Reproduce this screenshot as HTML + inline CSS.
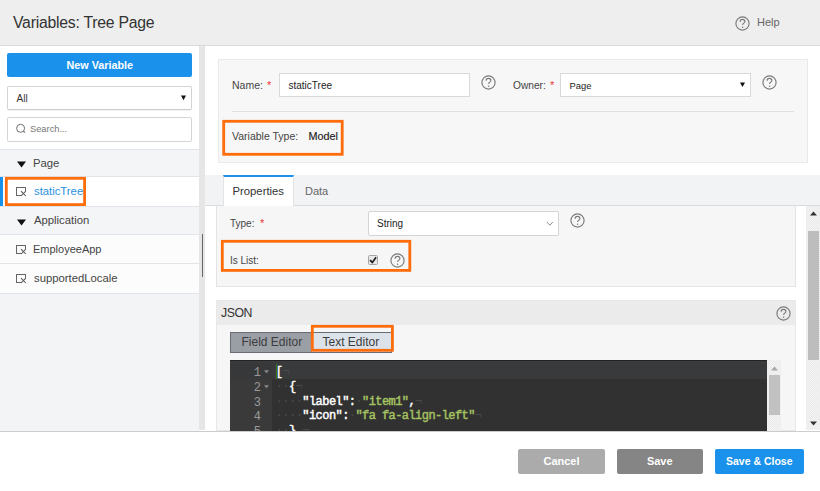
<!DOCTYPE html>
<html><head><meta charset="utf-8">
<style>
*{box-sizing:border-box;margin:0;padding:0}
html,body{width:820px;height:491px;overflow:hidden;background:#fff;font-family:"Liberation Sans",sans-serif;color:#333}
.a{position:absolute}
.t{position:absolute;white-space:nowrap;line-height:1}
.q{position:absolute;width:15px;height:15px}
.ob{position:absolute;border:2px solid #f57a22}
.gl{position:absolute;left:0;width:31px;text-align:right;font-family:"Liberation Mono",monospace;font-size:12px;line-height:14.65px;color:#9a9a9a;white-space:pre}
.cl{position:absolute;left:45.8px;font-family:"Liberation Mono",monospace;font-size:12px;letter-spacing:-0.57px;line-height:14.65px;color:#fff;white-space:pre;-webkit-text-stroke:0.45px currentColor}
.inv{color:#4a4a4a;-webkit-text-stroke:0}
.key{color:#fff}
.str{color:#a5c261}
</style></head><body>
<!-- header -->
<div class="a" style="left:0;top:0;width:820px;height:46px;background:#eeeeee;border-bottom:1px solid #d9d9d9"></div>
<div class="t" style="left:13px;top:15px;font-size:15.8px;letter-spacing:-0.25px;color:#333">Variables: Tree Page</div>
<svg class="q" style="left:734.5px;top:16px" viewBox="0 0 15 15"><circle cx="7.5" cy="7.5" r="6.6" fill="none" stroke="#7a7a7a" stroke-width="1.15"/><path d="M5.1 5.7C5.1 4.1 6.2 3.4 7.5 3.4C8.9 3.4 9.9 4.3 9.9 5.5C9.9 7.1 7.6 7.2 7.6 8.9" fill="none" stroke="#7a7a7a" stroke-width="1.1"/><circle cx="7.6" cy="11.2" r="0.75" fill="#7a7a7a"/></svg>
<div class="t" style="left:757px;top:17px;font-size:11px;color:#666">Help</div>

<!-- left panel -->
<div class="a" style="left:199px;top:46px;width:6px;height:384px;background:#e6e6e6"></div>
<div class="a" style="left:201.5px;top:234px;width:1.5px;height:43px;background:#666"></div>
<div class="a" style="left:7px;top:53px;width:185px;height:24px;background:#1a91eb;border-radius:2px"></div>
<div class="t" style="left:66.5px;top:59.8px;font-size:10.8px;font-weight:bold;color:#fff">New Variable</div>
<div class="a" style="left:7px;top:86px;width:185px;height:24px;background:#fff;border:1px solid #d4d4d4;border-bottom-color:#cdcdcd;border-radius:2px;box-shadow:0 1px 0 rgba(0,0,0,0.05)"></div>
<div class="t" style="left:16.5px;top:93.5px;font-size:10px;color:#333">All</div>
<svg class="a" style="left:181px;top:95px" width="5" height="6" viewBox="0 0 5 6"><path d="M0 0.5H5L2.5 5.3Z" fill="#111"/></svg>
<div class="a" style="left:7px;top:117px;width:185px;height:25px;background:#fff;border:1px solid #d4d4d4;border-radius:2px"></div>
<svg class="a" style="left:15px;top:123px" width="12" height="12" viewBox="0 0 12 12"><circle cx="5.6" cy="5.3" r="4" fill="none" stroke="#707070" stroke-width="1"/><path d="M8.4 8.1L10 9.7" stroke="#707070" stroke-width="1.1"/></svg>
<div class="t" style="left:30px;top:124.5px;font-size:9.3px;color:#777">Search...</div>

<!-- tree -->
<div class="a" style="left:0;top:293px;width:199px;height:138px;background:#f3f4f6"></div>
<div class="a" style="left:0;top:149px;width:199px;height:1px;background:#e1e5e9"></div>
<div class="a" style="left:0;top:150px;width:199px;height:26px;background:#f4f5f7"></div>
<div class="a" style="left:0;top:176px;width:199px;height:1px;background:#e1e5e9"></div>
<div class="a" style="left:0;top:177px;width:199px;height:29px;background:#fff"></div>
<div class="a" style="left:0;top:177px;width:2.8px;height:29px;background:#1a91eb"></div>
<div class="a" style="left:0;top:206px;width:199px;height:1px;background:#e1e5e9"></div>
<div class="a" style="left:0;top:207px;width:199px;height:27px;background:#f4f5f7"></div>
<div class="a" style="left:0;top:234px;width:199px;height:1px;background:#e1e5e9"></div>
<div class="a" style="left:0;top:235px;width:199px;height:28px;background:#fcfcfc"></div>
<div class="a" style="left:0;top:263px;width:199px;height:1px;background:#e1e5e9"></div>
<div class="a" style="left:0;top:264px;width:199px;height:29px;background:#fcfcfc"></div>
<div class="a" style="left:0;top:293px;width:199px;height:1px;background:#e1e5e9"></div>
<svg class="a" style="left:17px;top:161px" width="10" height="7" viewBox="0 0 10 7"><path d="M0 0.5H9L4.5 6.5Z" fill="#111"/></svg>
<div class="t" style="left:33px;top:158px;font-size:11.3px;color:#444">Page</div>
<svg class="a" style="left:16px;top:187px" width="11" height="10" viewBox="0 0 11 10"><path d="M0 0.5H10M0.5 0V9M0 8.5H5.5M9.5 0V4" fill="none" stroke="#666" stroke-width="1"/><path d="M5 4.2L9.8 9M9.8 4.2L5 9" stroke="#555" stroke-width="1.05"/></svg>
<div class="t" style="left:34px;top:186px;font-size:11.3px;color:#2a91e0">staticTree</div>
<svg class="a" style="left:17px;top:218.5px" width="10" height="7" viewBox="0 0 10 7"><path d="M0 0.5H9L4.5 6.5Z" fill="#111"/></svg>
<div class="t" style="left:34px;top:215px;font-size:11.3px;color:#444">Application</div>
<svg class="a" style="left:16px;top:244.5px" width="11" height="10" viewBox="0 0 11 10"><path d="M0 0.5H10M0.5 0V9M0 8.5H5.5M9.5 0V4" fill="none" stroke="#666" stroke-width="1"/><path d="M5 4.2L9.8 9M9.8 4.2L5 9" stroke="#555" stroke-width="1.05"/></svg>
<div class="t" style="left:33px;top:244px;font-size:11px;color:#444">EmployeeApp</div>
<svg class="a" style="left:16px;top:273.5px" width="11" height="10" viewBox="0 0 11 10"><path d="M0 0.5H10M0.5 0V9M0 8.5H5.5M9.5 0V4" fill="none" stroke="#666" stroke-width="1"/><path d="M5 4.2L9.8 9M9.8 4.2L5 9" stroke="#555" stroke-width="1.05"/></svg>
<div class="t" style="left:34px;top:273px;font-size:11.3px;color:#444">supportedLocale</div>

<!-- panel 1 -->
<div class="a" style="left:218px;top:59px;width:590px;height:104px;background:#f7f7f7;border:1px solid #e9e9e9"></div>
<div class="t" style="left:232px;top:79.5px;font-size:10.5px;color:#444">Name:</div>
<div class="t" style="left:267px;top:80px;font-size:11px;color:#e33">*</div>
<div class="a" style="left:279px;top:73px;width:191px;height:24px;background:#fff;border:1px solid #d9d9d9"></div>
<div class="t" style="left:288.5px;top:81px;font-size:10px;color:#222">staticTree</div>
<svg class="q" style="left:481px;top:75px" viewBox="0 0 15 15"><circle cx="7.5" cy="7.5" r="6.6" fill="none" stroke="#7a7a7a" stroke-width="1.15"/><path d="M5.1 5.7C5.1 4.1 6.2 3.4 7.5 3.4C8.9 3.4 9.9 4.3 9.9 5.5C9.9 7.1 7.6 7.2 7.6 8.9" fill="none" stroke="#7a7a7a" stroke-width="1.1"/><circle cx="7.6" cy="11.2" r="0.75" fill="#7a7a7a"/></svg>
<div class="t" style="left:513px;top:80.5px;font-size:10.2px;color:#444">Owner:</div>
<div class="t" style="left:550px;top:80px;font-size:11px;color:#e33">*</div>
<div class="a" style="left:560px;top:73px;width:191px;height:24px;background:#fff;border:1px solid #d9d9d9"></div>
<div class="t" style="left:569.5px;top:81px;font-size:9.4px;color:#222">Page</div>
<svg class="a" style="left:740px;top:82px" width="5" height="6" viewBox="0 0 5 6"><path d="M0 0.5H5L2.5 5.1Z" fill="#111"/></svg>
<svg class="q" style="left:762px;top:75px" viewBox="0 0 15 15"><circle cx="7.5" cy="7.5" r="6.6" fill="none" stroke="#7a7a7a" stroke-width="1.15"/><path d="M5.1 5.7C5.1 4.1 6.2 3.4 7.5 3.4C8.9 3.4 9.9 4.3 9.9 5.5C9.9 7.1 7.6 7.2 7.6 8.9" fill="none" stroke="#7a7a7a" stroke-width="1.1"/><circle cx="7.6" cy="11.2" r="0.75" fill="#7a7a7a"/></svg>
<div class="a" style="left:232px;top:110.5px;width:562px;height:1px;background:#e0e0e0"></div>
<div class="t" style="left:232px;top:131px;font-size:10.5px;color:#444">Variable Type:</div>
<div class="t" style="left:308.5px;top:131px;font-size:10.8px;color:#222;-webkit-text-stroke:0.15px #222">Model</div>

<!-- tabs -->
<div class="a" style="left:205px;top:175px;width:615px;height:31px;background:#f2f3f5;border-bottom:1px solid #dcdcdc"></div>
<div class="a" style="left:222.5px;top:175px;width:71px;height:31px;background:#fff;border-top:2px solid #1a91eb;border-left:1px solid #e3e3e3;border-right:1px solid #e3e3e3"></div>
<div class="t" style="left:232.5px;top:186px;font-size:11.3px;color:#333">Properties</div>
<div class="t" style="left:305px;top:186px;font-size:11px;color:#666">Data</div>

<!-- properties -->
<div class="a" style="left:216px;top:206px;width:580px;height:81px;background:#f6f6f6;border:1px solid #e4e4e4;border-top:none"></div>
<div class="t" style="left:230px;top:219px;font-size:10px;color:#444">Type:</div>
<div class="t" style="left:260px;top:218px;font-size:11px;color:#e33">*</div>
<div class="a" style="left:368px;top:211px;width:191px;height:25px;background:#fff;border:1px solid #d4d4d4;border-radius:2px"></div>
<div class="t" style="left:377px;top:219px;font-size:10px;color:#222">String</div>
<svg class="a" style="left:545.5px;top:221px" width="8" height="6" viewBox="0 0 8 6"><path d="M0.8 1L3.8 4.2L6.8 1" fill="none" stroke="#8a8a8a" stroke-width="1"/></svg>
<svg class="q" style="left:569.5px;top:213px" viewBox="0 0 15 15"><circle cx="7.5" cy="7.5" r="6.6" fill="none" stroke="#7a7a7a" stroke-width="1.15"/><path d="M5.1 5.7C5.1 4.1 6.2 3.4 7.5 3.4C8.9 3.4 9.9 4.3 9.9 5.5C9.9 7.1 7.6 7.2 7.6 8.9" fill="none" stroke="#7a7a7a" stroke-width="1.1"/><circle cx="7.6" cy="11.2" r="0.75" fill="#7a7a7a"/></svg>
<div class="t" style="left:230px;top:256px;font-size:10px;color:#444">Is List:</div>
<div class="a" style="left:368px;top:255px;width:10px;height:10px;background:#e9e9e9;border:1px solid #a5a5a5;border-radius:1.5px"></div>
<svg class="a" style="left:368px;top:255px" width="10" height="10" viewBox="0 0 10 10"><path d="M2 5.2L4.3 7.4L8.1 2.3" fill="none" stroke="#1e1e1e" stroke-width="1.7"/></svg>
<svg class="q" style="left:389.5px;top:253px" viewBox="0 0 15 15"><circle cx="7.5" cy="7.5" r="6.6" fill="none" stroke="#7a7a7a" stroke-width="1.15"/><path d="M5.1 5.7C5.1 4.1 6.2 3.4 7.5 3.4C8.9 3.4 9.9 4.3 9.9 5.5C9.9 7.1 7.6 7.2 7.6 8.9" fill="none" stroke="#7a7a7a" stroke-width="1.1"/><circle cx="7.6" cy="11.2" r="0.75" fill="#7a7a7a"/></svg>

<!-- main scrollbar -->
<div class="a" style="left:806px;top:206px;width:14px;height:224px;background-color:#f1f1f1;background-image:repeating-conic-gradient(#ebebeb 0 25%,#f3f3f3 0 50%);background-size:2px 2px"></div>
<svg class="a" style="left:810px;top:211px" width="7" height="5" viewBox="0 0 7 5"><path d="M0 4.5H7L3.5 0.5Z" fill="#333"/></svg>
<div class="a" style="left:808px;top:231px;width:11px;height:129px;background:#bdbdbd"></div>
<svg class="a" style="left:810px;top:420.5px" width="7" height="5" viewBox="0 0 7 5"><path d="M0 0.5H7L3.5 4.5Z" fill="#333"/></svg>

<!-- JSON panel -->
<div class="a" style="left:216px;top:300px;width:580px;height:131px;background:#f6f6f6;border:1px solid #e8e8e8"></div>
<div class="a" style="left:217px;top:301px;width:578px;height:23.5px;background:#ebebeb"></div>
<div class="t" style="left:221px;top:306.8px;font-size:12.3px;letter-spacing:-0.45px;color:#333">JSON</div>
<svg class="q" style="left:776px;top:305.5px" viewBox="0 0 15 15"><circle cx="7.5" cy="7.5" r="6.6" fill="none" stroke="#7a7a7a" stroke-width="1.15"/><path d="M5.1 5.7C5.1 4.1 6.2 3.4 7.5 3.4C8.9 3.4 9.9 4.3 9.9 5.5C9.9 7.1 7.6 7.2 7.6 8.9" fill="none" stroke="#7a7a7a" stroke-width="1.1"/><circle cx="7.6" cy="11.2" r="0.75" fill="#7a7a7a"/></svg>
<div class="a" style="left:229.5px;top:332px;width:83px;height:21px;background:#9a9ea5;border:1px solid #6a6e74"></div>
<div class="a" style="left:312px;top:332px;width:80px;height:21px;background:#dce2ea;border:1px solid #6a6e74;border-left:none"></div>
<div class="t" style="left:241.5px;top:336px;font-size:12px;color:#3c3c3c">Field Editor</div>
<div class="t" style="left:322.5px;top:336px;font-size:12px;color:#3c3c3c">Text Editor</div>

<!-- editor -->
<div class="a" style="left:230px;top:360px;width:537px;height:71px;background:#313131;border-top:1px solid #222"></div>
<div class="a" style="left:230px;top:361px;width:42px;height:70px;background:#3a3a3a"></div>
<div class="a" style="left:272px;top:361px;width:495px;height:3.2px;background:#3b3b3b"></div>
<div class="a" style="left:230px;top:364.2px;width:42px;height:14.6px;background:#37383a"></div>
<div class="a" style="left:272px;top:364.2px;width:495px;height:14.6px;background:#393a3c"></div>
<div class="a" style="left:767px;top:360px;width:14px;height:71px;background-color:#f1f1f1;background-image:repeating-conic-gradient(#ebebeb 0 25%,#f3f3f3 0 50%);background-size:2px 2px"></div>
<svg class="a" style="left:770.5px;top:366px" width="7" height="5" viewBox="0 0 7 5"><path d="M0 4.5H7L3.5 0.5Z" fill="#aaa"/></svg>
<div class="a" style="left:769px;top:375px;width:11px;height:40px;background:#c1c1c1"></div>
<div class="a" style="left:275.8px;top:364.2px;width:1.3px;height:14.6px;background:#437a16"></div>
<div class="a" style="left:230px;top:360px;width:537px;height:71px;overflow:hidden">
<div class="gl" style="top:6.20px">1</div>
<svg class="a" style="left:34px;top:10.00px" width="5" height="4" viewBox="0 0 5 4"><path d="M0 0.2H5L2.5 3.2Z" fill="#8a8a8a"/></svg>
<div class="cl" style="top:5.20px">[<span class="inv">¬</span></div>
<div class="gl" style="top:20.85px">2</div>
<svg class="a" style="left:34px;top:24.65px" width="5" height="4" viewBox="0 0 5 4"><path d="M0 0.2H5L2.5 3.2Z" fill="#8a8a8a"/></svg>
<div class="cl" style="top:19.85px"><span class="inv">·</span><span class="inv">·</span>{<span class="inv">¬</span></div>
<div class="gl" style="top:35.50px">3</div>
<div class="cl" style="top:34.50px"><span class="inv">·</span><span class="inv">·</span><span class="inv">·</span><span class="inv">·</span><span class="key">"label"</span>:<span class="inv">·</span><span class="str">"item1"</span>,<span class="inv">¬</span></div>
<div class="gl" style="top:50.15px">4</div>
<div class="cl" style="top:49.15px"><span class="inv">·</span><span class="inv">·</span><span class="inv">·</span><span class="inv">·</span><span class="key">"icon"</span>:<span class="inv">·</span><span class="str">"fa fa-align-left"</span><span class="inv">¬</span></div>
<div class="gl" style="top:64.80px">5</div>
<div class="cl" style="top:63.80px"><span class="inv">·</span><span class="inv">·</span>},<span class="inv">¬</span></div>
</div>

<!-- footer -->
<div class="a" style="left:0;top:431px;width:820px;height:60px;background:#fff;border-top:1px solid #cccccc"></div>
<div class="a" style="left:518px;top:449px;width:87px;height:24.5px;background:#ababab;border-radius:2px"></div>
<div class="t" style="left:518px;top:456px;width:87px;text-align:center;font-size:11px;font-weight:bold;color:#fff">Cancel</div>
<div class="a" style="left:616.5px;top:449px;width:86.5px;height:24.5px;background:#858585;border-radius:2px"></div>
<div class="t" style="left:616.5px;top:456px;width:86.5px;text-align:center;font-size:11px;font-weight:bold;color:#fff">Save</div>
<div class="a" style="left:715px;top:449px;width:88.5px;height:24.5px;background:#1a91eb;border-radius:2px"></div>
<div class="t" style="left:715px;top:456px;width:88.5px;text-align:center;font-size:10.5px;font-weight:bold;color:#fff">Save &amp; Close</div>
<svg class="a" style="left:0;top:0;z-index:5" width="820" height="491" viewBox="0 0 820 491"><rect x="6.30" y="178.30" width="78.30" height="26.30" fill="none" stroke="#ff6c0c" stroke-width="2.8"/><rect x="223.70" y="121.30" width="118.50" height="33.00" fill="none" stroke="#ff6c0c" stroke-width="2.8"/><rect x="222.30" y="241.30" width="187.50" height="29.10" fill="none" stroke="#ff6c0c" stroke-width="2.8"/><rect x="312.30" y="326.30" width="80.10" height="24.00" fill="none" stroke="#ff6c0c" stroke-width="2.8"/></svg>
</body></html>
